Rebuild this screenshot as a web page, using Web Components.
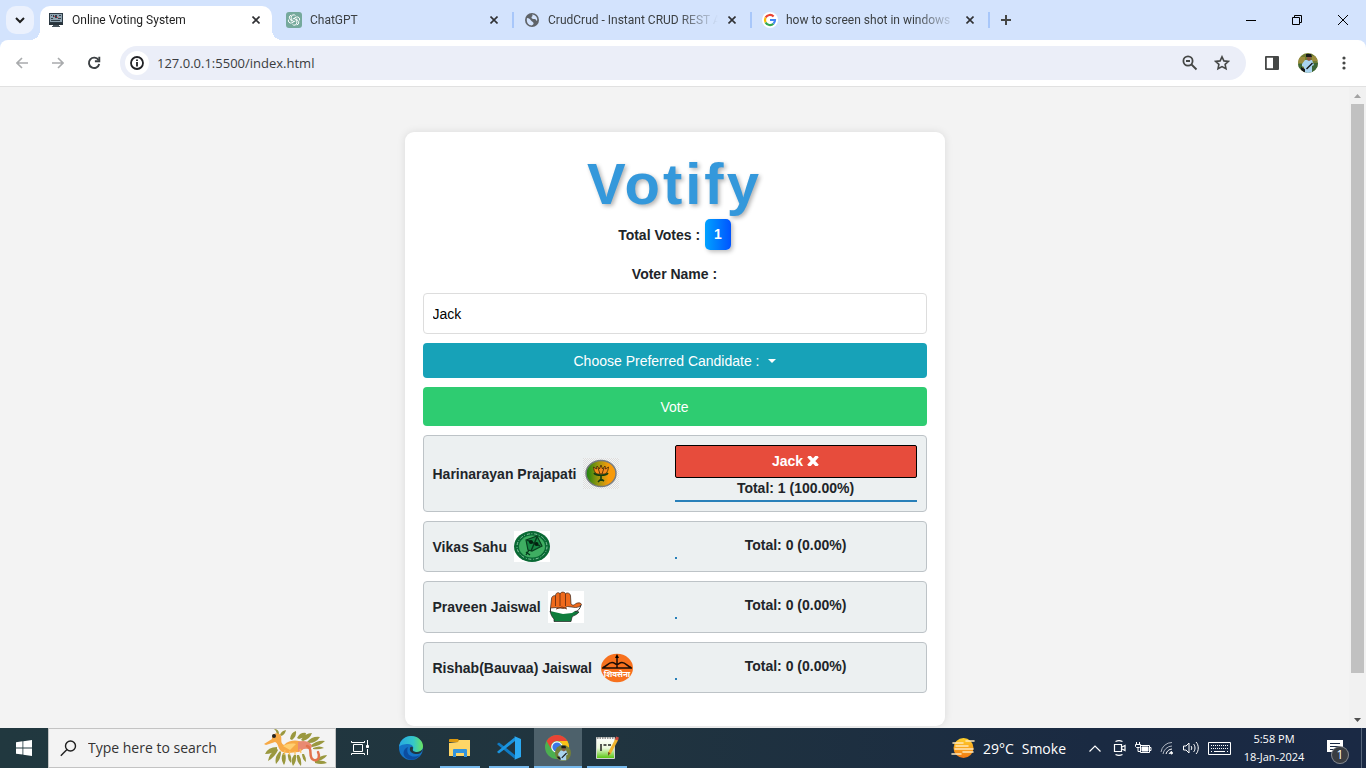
<!DOCTYPE html>
<html lang="en">
<head>
<meta charset="utf-8">
<title>Online Voting System</title>
<style>
html, body { margin: 0; height: 100%; }
body { font-family: "Open Sans", "Noto Sans", sans-serif; font-size: 12px; color: #1f1f1f; overflow: hidden; }
</style>
</head>
<body>
<desktop-screen></desktop-screen>

<template id="desktop-screen">
<style>
:host { display: flex; flex-direction: column; height: 100vh; background: #d3e3fd; }
main { flex: 1; min-height: 0; display: flex; background: #f3f3f3; border-top: 1px solid #e1e1e1; }
.page { flex: 1; overflow: hidden; display: flex; justify-content: center; align-items: flex-start; padding-top: 45px; box-sizing: border-box; }
</style>
<tab-strip></tab-strip>
<tool-bar></tool-bar>
<main>
  <div class="page"><vote-card></vote-card></div>
  <scroll-track></scroll-track>
</main>
<task-bar></task-bar>
</template>

<template id="tab-strip">
<style>
:host { display: flex; height: 40px; align-items: center; padding-left: 6px; }
button { border: 0; background: none; padding: 0; display: grid; place-items: center; }
.search { width: 28px; height: 28px; border-radius: 10px; background: #ebf1fd; }
.tabs { display: flex; align-self: stretch; }
.sep { width: 2px; height: 16px; background: #a8c7fa; margin-left: 2px; }
.plus { width: 32px; height: 28px; }
.wins { margin-left: auto; display: flex; align-self: stretch; }
.wins button { width: 46px; }
svg { display: block; fill: none; }
</style>
<button class="search" aria-label="Search tabs"><svg width="10" height="8" stroke="#1f1f1f" stroke-width="2"><path d="M1 2l4 4 4-4"/></svg></button>
<div class="tabs" role="tablist">
  <browser-tab active><svg slot="icon" width="16" height="16" viewBox="0 0 16 16"><path fill="#2d3a44" d="M1 1h14v10H1z"/><path fill="#8fa3b0" d="M2 2h12v8H2z"/><path fill="#34414b" d="M3 3h1v1H3zm2 0h1v2H5zm6 0h2v1h-2zM3 6h2v1H3zm4-3h2v3H7zm3 3h3v1h-3zM3 8h9v1H3z"/><path fill="#d63c42" d="M6 4h1v1H6zm3 1h1v1H9z"/><path fill="#27323a" d="M1 11h14v2H1z"/><path fill="#46525b" d="M5 13h6v1H5zm-1 1h8v1H4z"/></svg>Online Voting System</browser-tab>
  <browser-tab><svg slot="icon" width="16" height="16" viewBox="0 0 16 16"><rect width="16" height="16" rx="3" fill="#75a99c"/><g fill="none" stroke="#fff" stroke-width="1"><path d="M5.200 9.500V5.200a2.400 2.400 0 0 1 4.400-1.300"/><path d="M8 6.400l3.700 2.100a2.400 2.400 0 0 1-1 4.400"/><path d="M8 9.600l-3.700-2.100A2.400 2.400 0 0 1 5.200 3.200M10.800 6.500v4.300a2.400 2.400 0 0 1-4.400 1.300M6.600 7.200l3.700-2.100a2.400 2.400 0 0 1 3 3.400M9.400 8.800l-3.700 2.100a2.400 2.400 0 0 1-3-3.400"/></g></svg>ChatGPT</browser-tab>
  <browser-tab divided><svg slot="icon" width="16" height="16" viewBox="0 0 16 16"><circle cx="8" cy="8" r="7" fill="#5f6368"/><path fill="#d3e3fd" d="M3 6c2 0 3 1 4 2.500s2 1 2.500 2.500S8 13 8 13.500C4.500 13.500 2 10.500 3 6zM8 2.500c2 0 3.500 1 4.500 2.500 1 2 .8 3 .5 4-1-.5-1-2-2.500-2S7.500 7 7.500 5.500 9.500 4.500 8 2.500z"/></svg>CrudCrud - Instant CRUD REST API</browser-tab>
  <browser-tab divided><svg slot="icon" width="16" height="16" viewBox="0 0 16 16"><circle cx="8" cy="8" r="8" fill="#fff"/><g fill="none" stroke-width="2.200"><path stroke="#ea4335" d="M3.600 5.600A5 5 0 0 1 11.600 4.500"/><path stroke="#fbbc05" d="M3.600 10.400a5 5 0 0 1 0-4.800"/><path stroke="#34a853" d="M3.600 10.400a5 5 0 0 0 7.800 1.300"/><path stroke="#4285f4" d="M8 8h5a5 5 0 0 1-1.600 3.700"/></g></svg>how to screen shot in windows</browser-tab>
</div>
<span class="sep"></span>
<button class="plus" aria-label="New tab"><svg width="12" height="12" stroke="#454746" stroke-width="2"><path d="M6 1v10M1 6h10"/></svg></button>
<div class="wins">
  <button aria-label="Minimize"><svg width="10" height="10" stroke="#000"><path d="M0 5.500h10"/></svg></button>
  <button aria-label="Restore"><svg width="10" height="10" stroke="#000"><path d="M.5 2.500h7v7h-7zM2.500 2.500v-2h7v7h-2"/></svg></button>
  <button aria-label="Close"><svg width="10" height="10" stroke="#000"><path d="M0 0l10 10M10 0L0 10"/></svg></button>
</div>
</template>

<template id="browser-tab">
<style>
:host { display: block; width: 238px; position: relative; color: #3c4043; }
.bg { position: absolute; inset: 6px 0 0 6px; display: none; background: #fff; border-radius: 10px 10px 0 0; }
.bg::before, .bg::after { content: ""; position: absolute; bottom: 0; width: 10px; height: 10px; }
.bg::before { left: -10px; background: radial-gradient(circle at 0 0, transparent 10px, #fff 10px); }
.bg::after { right: -10px; background: radial-gradient(circle at 100% 0, transparent 10px, #fff 10px); }
:host([active]) { color: #1f1f1f; }
:host([active]) .bg { display: block; }
:host([divided])::before { content: ""; position: absolute; left: 2px; top: 12px; width: 2px; height: 16px; background: #a8c7fa; }
.row { position: relative; display: flex; align-items: center; height: 40px; padding: 0 6px 0 14px; box-sizing: border-box; }
.title { flex: 1; margin-left: 8px; overflow: hidden; white-space: nowrap; font: 12px/20px Roboto, "Open Sans", sans-serif;
  -webkit-mask: linear-gradient(90deg, #000 calc(100% - 40px), transparent); mask: linear-gradient(90deg, #000 calc(100% - 40px), transparent); }
button { border: 0; background: none; width: 20px; height: 20px; padding: 0; display: grid; place-items: center; margin-left: 4px; }
</style>
<div class="bg"></div>
<div class="row" role="tab"><slot name="icon"></slot><span class="title"><slot></slot></span>
<button aria-label="Close tab"><svg width="8" height="8" stroke="#303134" stroke-width="1.600"><path d="M.5.5l7 7M7.500.5l-7 7"/></svg></button></div>
</template>

<template id="tool-bar">
<style>
:host { display: flex; align-items: center; height: 46px; background: #fff; border-radius: 8px 8px 0 0; padding: 0 4px; }
button { border: 0; background: none; padding: 0; width: 36px; height: 34px; display: grid; place-items: center; }
svg { display: block; }
.omni { flex: 1; display: flex; align-items: center; height: 34px; margin: 0 8px; border-radius: 17px; background: #ebeef8; }
.omni button { width: 32px; }
.omni .info { width: 24px; height: 24px; margin: 0 8px 0 5px; border-radius: 50%; background: #fff; }
input { flex: 1; min-width: 0; border: 0; padding: 0; background: none; outline: 0; font: 13px/20px "Open Sans", "Noto Sans", sans-serif; color: #3a3c40; }
.end { margin-right: 8px; }
</style>
<button aria-label="Back"><svg width="12" height="12" fill="none" stroke="#a9abad" stroke-width="1.600"><path d="M12 6H1M6 1L1 6l5 5"/></svg></button>
<button aria-label="Forward"><svg width="12" height="12" fill="none" stroke="#a9abad" stroke-width="1.600"><path d="M0 6h11M6 1l5 5-5 5"/></svg></button>
<button aria-label="Reload"><svg width="14" height="14" fill="none" stroke="#3c4043" stroke-width="1.900"><path d="M11.500 4A5.200 5.200 0 1 0 12.200 8"/><path d="M12.300.8v4.400H7.900"/></svg></button>
<div class="omni">
  <button class="info" aria-label="Site information"><svg width="14" height="14" fill="none" stroke="#202124" stroke-width="1.800"><circle cx="7" cy="7" r="6"/><path d="M7 6v4.500M7 3.500v1.600"/></svg></button>
  <input aria-label="Address" value="127.0.0.1:5500/index.html">
  <button aria-label="Zoom"><svg width="16" height="16" fill="none" stroke="#454746" stroke-width="1.800"><circle cx="6" cy="6" r="4.600"/><path d="M9.500 9.500L14.500 14.500M4 6h4"/></svg></button>
  <button class="end" aria-label="Bookmark"><svg width="16" height="16" fill="none" stroke="#454746" stroke-width="1.600"><path d="M8 1.800l1.900 4.100 4.500.5-3.300 3 .9 4.400L8 11.600l-4 2.200.9-4.400-3.300-3 4.500-.5z"/></svg></button>
</div>
<button aria-label="Side panel"><svg width="16" height="16"><path fill="#454746" d="M2 1h12a1 1 0 0 1 1 1v12a1 1 0 0 1-1 1H2a1 1 0 0 1-1-1V2a1 1 0 0 1 1-1zm.8 1.800v10.400H9V2.800z" fill-rule="evenodd"/></svg></button>
<button aria-label="Profile"><user-photo></user-photo></button>
<button aria-label="Menu"><svg width="4" height="14" fill="#454746"><circle cx="2" cy="2" r="1.600"/><circle cx="2" cy="7" r="1.600"/><circle cx="2" cy="12" r="1.600"/></svg></button>
</template>

<template id="user-photo">
<style>:host { display: block; width: 20px; height: 20px; } svg { display: block; width: 100%; height: 100%; border-radius: 50%; }</style>
<svg viewBox="0 0 20 20"><path fill="#6f7d32" d="M0 0h20v20H0z"/><path fill="#9a8b3c" d="M0 4h7v6H0zM14 3h6v5h-6z"/><path fill="#3c6636" d="M14 10h6v10h-6zM0 11h4v5H0z"/><path fill="#a9d3ee" d="M4 11l3-4h7l2 5-2 1v7H6v-6l-2-1z"/><path fill="#8b5a3e" d="M9 3h4v4l-2 1-2-1z"/><path fill="#17191c" d="M8 1h5l1 3H8zM14 9.500l1 1-6 6-1-1zM3 14l4 2v4l-4-3z"/></svg>
</template>

<template id="scroll-track">
<style>
:host { display: flex; flex-direction: column; width: 17px; background: #f1f1f1; align-items: center; }
.arrow { height: 17px; display: grid; place-items: center; }
.thumb { width: 13px; background: #c1c1c1; flex: 569; }
.rest { flex: 38; }
</style>
<span class="arrow"><svg width="7" height="4" fill="#a3a3a3"><path d="M0 4L3.500 0 7 4z"/></svg></span>
<span class="thumb"></span><span class="rest"></span>
<span class="arrow"><svg width="7" height="4" fill="#505050"><path d="M0 0l3.500 4L7 0z"/></svg></span>
</template>

<template id="vote-card">
<style>
:host { display: flex; flex-direction: column; gap: 9px; box-sizing: border-box; width: 540px; max-width: 100%; padding: 18px 18px 33px; background: #fff; border-radius: 9px; box-shadow: 0 0 9px rgba(0,0,0,.1);
  font: 14px/20px Arial, "Liberation Sans", sans-serif; color: #212529; }
header { text-align: center; font-weight: 700; margin-bottom: 5px; }
h1 { margin: 0 0 2px; font-size: 58px; line-height: 67px; letter-spacing: 3px; color: #3498db; text-shadow: 2px 2px 4px rgba(0,0,0,.3); }
.total { display: flex; justify-content: center; align-items: center; gap: 5px; }
.badge { padding: 0 9px; line-height: 31px; border-radius: 5px; color: #fff; background: linear-gradient(90deg, #00a2ff, #0054ff); box-shadow: 2px 2px 4px rgba(0,0,0,.25); }
label { text-align: center; font-weight: 700; }
input { box-sizing: border-box; width: 100%; height: 41px; padding: 0 9px; border: 1px solid #ddd; border-radius: 4px; font: inherit; color: #000; outline: 0; }
button { border: 0; border-radius: 4px; font: inherit; color: #fff; padding: 0; }
.choose { height: 35px; background: #17a2b8; display: flex; justify-content: center; align-items: center; gap: 8px; }
.choose::after { content: ""; border: 4px solid transparent; border-top-color: #fff; border-bottom: 0; }
.vote { height: 39px; background: #2ecc71; }
.voter { height: 33px; border: 1px solid #000; border-radius: 2px; background: #e74c3c; }
</style>
<header><h1>Votify</h1><div class="total"><span>Total Votes :</span><span class="badge">1</span></div></header>
<label for="voter">Voter Name :</label>
<input id="voter" value="Jack">
<button class="choose" aria-haspopup="listbox">Choose Preferred Candidate :</button>
<button class="vote">Vote</button>
<candidate-row full>Harinarayan Prajapati
  <svg slot="symbol" width="36" height="31" viewBox="0 0 36 31"><defs><pattern id="chk" width="2" height="2" patternUnits="userSpaceOnUse"><path fill="#f4f4f4" d="M0 0h2v2H0z"/><path fill="#dcdede" d="M0 0h1v1H0zm1 1h1v1H1z"/></pattern><linearGradient id="lot"><stop offset="0" stop-color="#15840f"/><stop offset=".4" stop-color="#9a960f"/><stop offset=".75" stop-color="#f79a0a"/></linearGradient></defs><path fill="url(#chk)" d="M0 0h36v31H0z"/><ellipse cx="18" cy="15.500" rx="15" ry="13" fill="url(#lot)" stroke="#777c80" stroke-width="1.500"/><path fill="#f58a1d" stroke="#3d2608" stroke-width=".8" d="M18 16c-5 1-7-2-7.500-7l3 2 .5-3 2.500 3L18 7l1.500 4L22 8l.5 3 3-2c-.5 5-2.500 8-7.500 7zM15 10l2 6M21 10l-2 6"/><path fill="none" stroke="#123c12" stroke-width="1.600" d="M11 15c2 3 12 3 14 0M18 17v6M15 24l3-3 3 2"/></svg>
  <button class="voter" slot="vote" type="button">Jack <svg width="12" height="10" viewBox="0 0 12 10" stroke="#fff" stroke-width="3.400"><path d="M1.500 0l9 10M10.500 0l-9 10"/></svg></button>
  <span slot="total">Total: 1 (100.00%)</span>
</candidate-row>
<candidate-row>Vikas Sahu
  <svg slot="symbol" width="36" height="31" viewBox="0 0 36 31"><path fill="#fff" d="M0 0h36v31H0z"/><ellipse cx="18" cy="15.500" rx="18" ry="15.500" fill="#096934"/><ellipse cx="18" cy="15.500" rx="15" ry="12.800" fill="none" stroke="#8ac8a3" stroke-width="1" stroke-dasharray="3 1.500 1 2"/><ellipse cx="18" cy="15.500" rx="13" ry="11" fill="#3fae62"/><path d="M12 9l11-4 5 10-10 5-4-1z" fill="#188744" stroke="#073e1e" stroke-width="1.200"/><path d="M13 9l13 6M23 6l-6 14M15 19l-3 5M12 21l4 3" stroke="#06391b" stroke-width="1.400"/><circle cx="17" cy="11" r="2" fill="#041f0f"/><circle cx="22.500" cy="13" r="2" fill="#041f0f"/></svg>
  <span slot="total">Total: 0 (0.00%)</span>
</candidate-row>
<candidate-row>Praveen Jaiswal
  <svg slot="symbol" width="36" height="32" viewBox="0 0 36 32"><path fill="#fff" d="M0 0h36v32H0z"/><path fill="#0f7d3d" stroke="#222" stroke-width=".7" d="M2 20c5-1 9 2 13 1 7-2 9-2 16 0-2 3-5 3-7 5l-1 4.500H6V28c-2-2-3-4-4-8z"/><path fill="#fff" d="M2 16l12 1 16-2v3l-6 4-9 1-13-3z"/><path fill="#ef6a1c" stroke="#3a2418" stroke-width=".7" d="M2.500 17l1-9c0-3 3-4 4-3 0-4 4-4 4.500-2 1-3 5.500-2 5.500 0 1-2 5-1 5 2l.5 8c2 2 3 1 5-.500 2-1 5-1 5.500 1-1 2-4 3-6 3l-8-1-4 2-7-1z"/><path fill="none" stroke="#7b3410" stroke-width="1" d="M7.500 5v10M12 3v12M17.500 3v12M8 18l6-2 5 2"/><path fill="none" stroke="#333" d="M33 14c-1 4-3 6-6 7M2.500 17v4"/></svg>
  <span slot="total">Total: 0 (0.00%)</span>
</candidate-row>
<candidate-row>Rishab(Bauvaa) Jaiswal
  <svg slot="symbol" width="36" height="31" viewBox="0 0 36 31"><ellipse cx="18" cy="16" rx="16" ry="14.300" fill="#f7711e"/><path fill="none" stroke="#1c0d05" stroke-width="1.500" d="M3 16h30M4 15.500c4-1 5-5 9-5 3 0 3 2 5 2s2-2 5-2c4 0 5 4 9 5M18 16V4"/><path d="M16 6l2-4 2 4z"/><text x="18" y="25" text-anchor="middle" font-family="Noto Sans, sans-serif" font-size="8" font-weight="700" fill="#fff">शिवसेना</text></svg>
  <span slot="total">Total: 0 (0.00%)</span>
</candidate-row>
</template>

<template id="candidate-row">
<style>
:host { display: grid; grid-template-columns: 1fr 1fr; align-items: center; padding: 9px; border: 1px solid #bdc3c7; border-radius: 4px; background: #ecf0f1; font-weight: 700; }
.name { display: flex; align-items: center; gap: 7px; }
.result { display: flex; flex-direction: column; text-align: center; line-height: 21px; }
.bar { width: 2px; height: 2px; margin-top: 1px; background: #2980b9; }
:host([full]) .bar { width: 100%; }
::slotted(svg) { display: block; }
</style>
<div class="name"><span><slot></slot></span><slot name="symbol"></slot></div>
<div class="result"><slot name="vote"></slot><slot name="total"></slot><span class="bar"></span></div>
</template>

<template id="task-app">
<style>
:host { display: grid; width: 48px; }
button { border: 0; background: none; padding: 0; display: grid; place-items: center; position: relative; }
:host([active]) button { background: #4d616b; }
:host([open]) button::after { content: ""; position: absolute; bottom: 0; left: 4px; right: 4px; height: 2px; background: #76b9ed; }
:host([active]) button::after { left: 0; right: 0; }
</style>
<button><slot></slot></button>
</template>

<template id="task-bar">
<style>
:host { display: flex; height: 40px; background: linear-gradient(90deg, #21383f, #20343f 45%, #1a2a42 80%, #1a2944); color: #fff; }
svg { display: block; flex: none; }
.search { display: flex; align-items: center; box-sizing: border-box; width: 288px; border: 1px solid #c3c3c3; background: #f3f3f3; padding: 0 6px 0 11px; }
input { flex: 1; min-width: 0; margin-left: 11px; padding: 0; border: 0; background: none; outline: 0; font: 14px/20px "Open Sans", "Noto Sans", sans-serif; color: #333; }
input::placeholder { color: #333; opacity: 1; }
.apps { display: flex; gap: 1px; margin-left: 3px; }
.tray { margin-left: auto; display: flex; align-items: center; }
button { border: 0; background: none; color: inherit; font: inherit; padding: 0; display: grid; place-items: center; height: 40px; width: 24px; }
.weather { display: flex; width: auto; align-items: center; gap: 8px; font-size: 14px; margin-right: 17px; }
.clock { width: 74px; line-height: 18px; font-size: 11px; margin-left: 2px; }
.kb { width: 32px; }
.note { width: 48px; position: relative; margin-right: 2px; }
.n { position: absolute; left: 21px; top: 19px; width: 16px; height: 16px; border-radius: 50%; background: #3a3d42; box-shadow: 0 0 0 1px #85898f; line-height: 16px; font-size: 12px; }
.desk { width: 5px; border-left: 1px solid #56657a; }
</style>
<task-app><svg width="16" height="16" fill="#fff"><path d="M0 2.200l6.500-.9v6.200H0zM7.300 1.200L16 0v7.500H7.300zM0 8.400h6.500v6.200L0 13.700zM7.300 8.400H16V16l-8.700-1.200z"/></svg></task-app>
<div class="search">
  <svg width="17" height="17" fill="none" stroke="#1f1f1f" stroke-width="1.400"><circle cx="10.500" cy="6" r="5"/><path d="M7 9.500L.8 15.800"/></svg>
  <input type="text" aria-label="Search" placeholder="Type here to search">
  <svg width="66" height="38" viewBox="0 0 66 38" fill="none"><g fill="#9a983f"><path d="M14 5q-1-4-3-5 5 0 5 5zM17 6q1-4 6-5-1 5-5 6zM27 10q1-7 6-8 1 5-4 9zM34 9q3-6 9-5 0 4-7 6zM38 11q4-7 11-7-2 6-9 8zM44 13q5-6 13-5-4 6-11 6zM47 17q7-6 15-5-5 5-13 6zM50 19q7-3 11 0-6 2-11 1z"/><path d="M14 18q-9 0-12 7 8 0 12-5zM14 20q-8 4-9 12 7-4 10-11zM17 22q-6 6-4 13 5-5 5-12zM20 24q-3 6 1 12 3-5 1-12zM25 25q-1 5 3 9 1-5-1-9zM31 26q-4 5-1 11 4-5 3-11zM34 26q-1 6 4 11 1-6-2-11zM39 25q0 5 4 8 0-5-2-8zM52 32q5-6 12-6-1 3-8 6 5-1 8 2-6 2-12 0z"/></g><path fill="#f7a945" d="M1 15l8-5c-1-6 7-8 9-3 1 4-1 7 3 9 6-6 15-5 20-2 2 2 0 8-6 9-7 1-15 2-18-2-2-3-2-7-5-8l-9 3z"/><path fill="#e98a72" d="M35 13c5-2 10-1 13 2 2 3 0 5-3 5-4-1-7 1-10 3z"/><path stroke="#e1724c" stroke-width="2.500" stroke-linecap="round" d="M44 17c7 2 0 12 7 14 5 1 6-4 4-8"/><path stroke="#fbc15c" stroke-width="1.200" d="M22 21l-1 5M27 22l-1 4M32 22v4M37 20l1 4"/><circle cx="11" cy="7" r="2" fill="#25231f"/><path fill="#ffcf70" d="M20 17c3-2 8-3 13-2l-6 6z"/></svg>
</div>
<task-app><svg width="18" height="16" fill="none" stroke="#fff"><path d="M2.500 4.500h9v7h-9zM.5 1v1.500h13V1M.5 15v-1.500h13V15M16.500 0v5M16.500 9v6"/><path fill="#fff" d="M15.500 5.500h2v2h-2z"/></svg></task-app>
<div class="apps">
<task-app><svg width="24" height="24" viewBox="0 0 24 24"><defs><linearGradient id="e1"><stop offset="0" stop-color="#27a9e2"/><stop offset=".6" stop-color="#35c7c9"/><stop offset="1" stop-color="#6ae45e"/></linearGradient></defs><circle cx="12" cy="12" r="12" fill="#1473c6"/><path fill="url(#e1)" d="M0 11C1 4 6 0 12 0c7 0 12 5 12 10 0 4-3 6-6 6-3 0-5-1-4-3 1-1 0-5-5-5-4 0-8 1-9 3z"/><path fill="#0c4da0" d="M9 11c-3 8 4 12 12 8-3 4-8 6-12 4-6-2-6-10 0-12z"/><path fill="#21363f" d="M11 12c1-2 3-1 3 0-1 3 1 4 4 4 2 0 4-1 6-3-1 3-3 5-6 5-4 0-8-2-7-6z"/></svg></task-app>
<task-app open><svg width="22" height="20" viewBox="0 0 22 20"><path fill="#dd9a10" d="M0 2a1 1 0 0 1 1-1h8l2 3H0z"/><path fill="#ffd667" d="M0 5l9-1 1-2h11v16H0z"/><path fill="#3494dc" d="M4 12a1 1 0 0 1 1-1h12a1 1 0 0 1 1 1v7h-3v-4H7v4H4z"/></svg></task-app>
<task-app open><svg width="24" height="24" viewBox="0 0 24 24"><path fill="#0f7bc4" d="M0 8l2-1.500L18 19v4L1 9z"/><path fill="#1b95e0" d="M0 16l2 1.500L18 5V1L1 15z"/><path fill="#2aa9f2" d="M17 0l7 3v18l-7 3 1-1V1z"/></svg></task-app>
<task-app open active><svg width="26" height="26" viewBox="0 0 26 26"><circle cx="12" cy="12" r="12" fill="#4caf50"/><path fill="#e94335" d="M1.600 6A12 12 0 0 1 22.400 6H12a6 6 0 0 0-5.200 9z"/><path fill="#fbc116" d="M22.400 6A12 12 0 0 1 12 24l5.200-9A6 6 0 0 0 12 6z"/><circle cx="12" cy="12" r="5.800" fill="#fff"/><circle cx="12" cy="12" r="4.600" fill="#3b78e7"/><svg x="10" y="10" width="16" height="16" viewBox="0 0 20 20"><circle cx="10" cy="10" r="10" fill="#73803a"/><path fill="#a9d3ee" d="M4 11l3-4h7l2 5-2 1v6H6v-5l-2-1z"/><path fill="#8b5a3e" d="M9 3h4v4l-2 1-2-1z"/><path fill="#17191c" d="M8 1h5l1 3H8zM14 9.500l1 1-6 6-1-1zM3 14l4 2v3l-4-3z"/></svg></svg></task-app>
<task-app open><svg width="24" height="24" viewBox="0 0 24 24"><defs><linearGradient id="np" x2="0" y2="1"><stop offset="0" stop-color="#fff"/><stop offset=".5" stop-color="#ecf9dd"/><stop offset="1" stop-color="#53c40b"/></linearGradient></defs><path fill="url(#np)" stroke="#cfd2cf" stroke-width="1" d="M1.500 1.500h18v21h-18z"/><path stroke="#777" stroke-width="1.500" stroke-dasharray="1.500 1" d="M2 2h17"/><path fill="none" stroke="#222" stroke-width="1.500" d="M6 15V8M8.500 9h3M13 9h3"/><path stroke="#f0b32e" stroke-width="3" d="M22 3l-8 15"/><path stroke="#cf4a40" stroke-width="3" d="M22.500 1l-1 3"/><path d="M13 20l0-4 2.500 1z" fill="#765222"/></svg></task-app>
</div>
<div class="tray">
<button class="weather"><svg width="24" height="22" viewBox="0 0 24 22"><defs><linearGradient id="sun" x2="0" y2="1"><stop offset="0" stop-color="#ffd12b"/><stop offset="1" stop-color="#f37913"/></linearGradient></defs><circle cx="12.500" cy="11" r="10" fill="url(#sun)"/><path stroke="#ffe8b8" stroke-width="1.600" stroke-linecap="round" d="M2 6h10M15 4h8M5 9h12M4 12h18M1 17h9M12 15h10"/></svg><span>29°C</span><span>Smoke</span></button>
<button aria-label="Hidden icons"><svg width="12" height="7" fill="none" stroke="#fff" stroke-width="1.200"><path d="M.5 6.500L6 1l5.500 5.500"/></svg></button>
<button aria-label="Meet now"><svg width="13" height="16" fill="none" stroke="#fff" stroke-width="1.200"><path d="M1.500 4.500h7v7h-7zM9 7l3-1.500v5L9 9M2.500 1.500c2-1 5-1 7 0M2.500 14.500c2 1 5 1 7 0"/></svg></button>
<button aria-label="Battery"><svg width="17" height="12" fill="none" stroke="#fff"><path d="M5.500 3.500h9v7h-9zM15 5.500h1v3h-1M1.500 0v2M4.500 0v2M.5 2.500h5v2l-1 1h-3l-1-1zM3 6v3.500h2"/><path fill="#fff" d="M7 5h6v4H7z"/></svg></button>
<button aria-label="Wi-Fi"><svg width="14" height="14" fill="none" stroke="#fff"><path stroke="#aeb5c0" d="M1 11A11 11 0 0 1 12 1.500M3 13a9.500 9.500 0 0 1 9-8"/><path d="M6 13a7 7 0 0 1 6-5M9 13a4 4 0 0 1 3-2.500"/><circle cx="11.500" cy="12" r="1" fill="#fff"/></svg></button>
<button aria-label="Volume"><svg width="17" height="14" fill="none" stroke="#fff"><path d="M.5 5h2.500l3-3v10L3 9H.5zM8 5c1 1 1 3 0 4M10.500 3c2 2 2 6 0 8M13 1c3 3 3 9 0 12"/></svg></button>
<button class="kb" aria-label="Keyboard"><svg width="23" height="13" fill="none" stroke="#fff"><path d="M.5.5h22v12H.5z"/><path stroke-dasharray="1 1" d="M3 3.500h17M3 6.500h17"/><path d="M6 9.500h11M3 9.500h1M19 9.500h1"/></svg></button>
<button class="clock"><span>5:58 PM<br>18-Jan-2024</span></button>
<button class="note" aria-label="Notifications"><svg width="16" height="16" fill="#fff"><path d="M0 0h16v12h-5v4l-4-4H0z"/><path stroke="#1a2944" d="M3 3.500h10M3 6.500h10M3 9.500h6"/></svg><span class="n">1</span></button>
<button class="desk" aria-label="Show desktop"></button>
</div>
</template>

<script>
class TemplateElement extends HTMLElement {
  constructor() {
    super();
    const template = document.getElementById(this.localName);
    this.attachShadow({ mode: "open" }).append(template.content.cloneNode(true));
  }
}
["user-photo", "browser-tab", "tab-strip", "tool-bar", "scroll-track", "candidate-row", "vote-card", "task-app", "task-bar", "desktop-screen"]
  .forEach(name => customElements.define(name, class extends TemplateElement {}));
</script>
</body>
</html>
